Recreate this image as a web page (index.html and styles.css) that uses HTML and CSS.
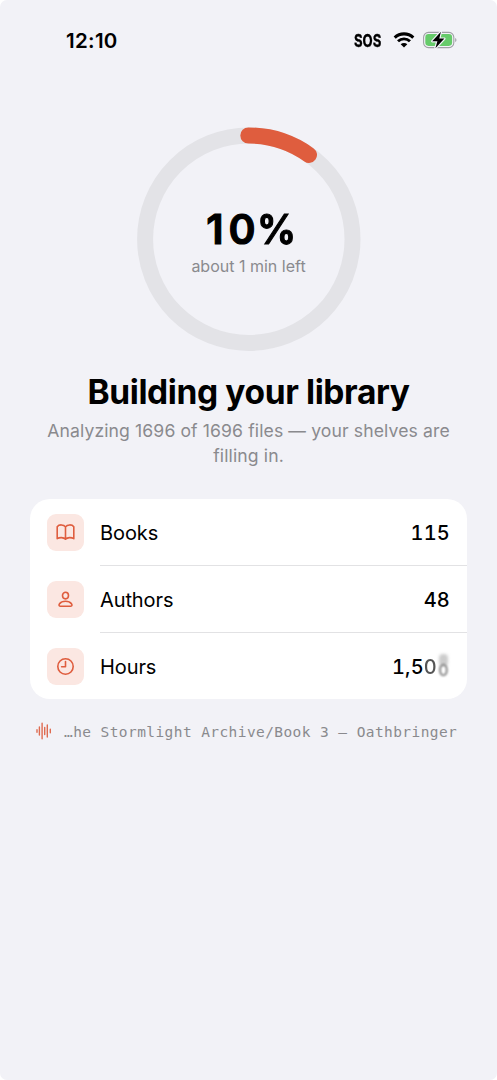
FILE: index.html
```html
<!DOCTYPE html>
<html lang="en">
<head>
<meta charset="utf-8">
<title>Building your library</title>
<link rel="stylesheet" href="styles.css">
</head>
<body>
<main class="screen">
  <header class="status">
    <span class="time">12:10</span>
    <div class="indicators">
      <span class="sos">SOS</span>
      <svg class="wifi" width="22" height="16" viewBox="0 0 22 16">
        <path d="M1.700 5.600C7 .6 15 .6 20.300 5.600" fill="none" stroke="#000" stroke-width="3.1"/>
        <path d="M5 9.300C8.400 6.100 13.600 6.100 17 9.300" fill="none" stroke="#000" stroke-width="2.900"/>
        <path d="M11 15.600L7.700 12.200C9.500 10.600 12.500 10.600 14.300 12.200Z"/>
      </svg>
      <svg class="battery" width="34" height="20" viewBox="0 0 34 20">
        <rect x=".6" y="2.400" width="30.200" height="15.200" rx="4.800" fill="#f2f2f7" stroke="#a0a0a5" stroke-width="1.100"/>
        <rect x="2.300" y="4.100" width="26.800" height="11.800" rx="3.300" fill="#66cb6a"/>
        <path d="M32.200 7.900C33.900 8.600 33.900 11.400 32.200 12.100Z" fill="#a0a0a5"/>
        <path d="M17.900 1.800L9.200 11.200H14.400L12.400 18.200L21.400 8.600H16.300Z" fill="#000" stroke="#f2f2f7" stroke-width="2.400" stroke-linejoin="round" paint-order="stroke"/>
      </svg>
    </div>
  </header>

  <section class="progress">
    <svg class="ring" width="224" height="224" viewBox="0 0 224 224">
      <circle cx="111.800" cy="112.200" r="103.700" fill="none" stroke="#e3e3e7" stroke-width="16"/>
      <path d="M111.300 8.500A103.700 103.700 0 0 1 172 27.900" fill="none" stroke="#df5d3e" stroke-width="16" stroke-linecap="round"/>
    </svg>
    <div class="reading">
      <span class="percent"><span class="lead">1</span>0<span class="sign">%</span></span>
      <span class="remaining">about 1 min left</span>
    </div>
  </section>

  <h1 class="title">Building your library</h1>
  <p class="subtitle">Analyzing 1696 of 1696 files — your shelves are<br>filling in.</p>

  <section class="card">
    <div class="row">
      <span class="tile">
        <svg class="icon" width="21" height="21" viewBox="0 0 21 21">
          <path d="M10.500 4.900C8.700 2.300 4 2.300 2.200 4.700V16.700C4.500 15.200 8.500 15.200 10.500 17.200C12.500 15.200 16.500 15.200 18.800 16.700V4.700C17 2.300 12.300 2.300 10.500 4.900ZV17"/>
        </svg>
      </span>
      <div class="line"><span>Books</span><span class="value">115</span></div>
    </div>
    <div class="row">
      <span class="tile">
        <svg class="icon" width="21" height="21" viewBox="0 0 21 21">
          <ellipse cx="10.500" cy="6.600" rx="3" ry="3.300"/>
          <path d="M5.200 17.200C2.600 17.200 4.300 12.300 10.500 12.300S18.400 17.200 15.800 17.200Z"/>
        </svg>
      </span>
      <div class="line"><span>Authors</span><span class="value">48</span></div>
    </div>
    <div class="row">
      <span class="tile">
        <svg class="icon" width="21" height="21" viewBox="0 0 21 21">
          <circle cx="10.500" cy="10.500" r="7.700"/>
          <path d="M10.500 5.500V10.700H6.600"/>
        </svg>
      </span>
      <div class="line"><span>Hours</span><span class="value rolling">1,5<span class="settling">0</span><span class="digit"><span class="outgoing"></span><span class="incoming">0</span></span></span></div>
    </div>
  </section>

  <footer class="current">
    <svg class="wave" width="16" height="18" viewBox="0 0 16 18">
      <path d="M1 7.800V10.200M3.400 5V13M6.100 1.200V16.800M8.700 5.500V12.500M11.300 3V15M14.300 7.200V10.800"/>
    </svg>
    <span class="path">…he Stormlight Archive/Book 3 – Oathbringer</span>
  </footer>
</main>
</body>
</html>
```
FILE: styles.css
```css
* { box-sizing: border-box; }
html { background: #fff; }
body { margin: 0; font-family: Inter, "Liberation Sans", sans-serif; color: #000; }
svg { display: block; flex: none; }
.screen {
  display: flex;
  flex-direction: column;
  width: 497px;
  height: 1080px;
  padding: 0 30px;
  overflow: hidden;
  border-radius: 7px;
  background: #f2f2f7;
}
.status {
  display: flex;
  align-items: center;
  justify-content: space-between;
  height: 80px;
  padding: 0 10px 0 36px;
}
.time { padding-top: 2px; font-size: 20.500px; font-weight: 600; letter-spacing: .3px; line-height: 24px; }
.indicators { display: flex; align-items: center; }
.sos {
  width: 28px;
  margin-right: 11px;
  padding-top: 1px;
  font-size: 18px;
  font-weight: 700;
  line-height: 24px;
  -webkit-text-stroke: .4px #000;
  transform: scaleX(.73);
  transform-origin: 0 50%;
}
.wifi { margin-right: 8px; }
.progress { display: grid; place-items: center; height: 224px; margin-top: 47px; }
.ring, .reading { grid-area: 1 / 1; }
.reading { display: flex; flex-direction: column; align-items: center; padding-top: 6px; }
.percent {
  display: flex;
  padding-left: 7px;
  font-size: 41px;
  font-weight: 600;
  line-height: 46px;
  -webkit-text-stroke: 1.200px #000;
  stroke-linejoin: round;
}
.lead { margin-right: 5px; }
.sign { margin-left: 1px; transform: scaleX(.95); transform-origin: 0 50%; }
.remaining { margin-top: 2px; font-size: 16px; line-height: 24px; color: #8a8a8e; white-space: nowrap; }
.title {
  margin: 20px 0 0;
  font-size: 33.500px;
  font-weight: 660;
  line-height: 42px;
  letter-spacing: -.380px;
  text-align: center;
  white-space: nowrap;
}
.subtitle {
  margin: 6px 0 0;
  font-size: 17.600px;
  line-height: 24.500px;
  letter-spacing: .110px;
  text-align: center;
  color: #8a8a8e;
  white-space: nowrap;
}
.card { height: 200px; margin-top: 31px; overflow: hidden; border-radius: 20px; background: #fff; }
.row { display: flex; align-items: center; gap: 16px; height: 67px; padding-left: 17px; }
.tile { display: grid; place-items: center; width: 37px; height: 37px; border-radius: 9px; background: #fbe7e2; }
.icon { fill: none; stroke: #df5d3e; stroke-width: 1.600; stroke-linecap: round; stroke-linejoin: round; }
.line {
  display: flex;
  flex: 1;
  align-items: center;
  justify-content: space-between;
  height: 67px;
  padding: 2px 17px 0 0;
  border-bottom: 1px solid #e2e2e4;
  font-size: 20px;
  letter-spacing: -.1px;
}
.row:last-child .line { border-bottom-color: transparent; }
.value { font-weight: 550; letter-spacing: .2px; font-variant-numeric: tabular-nums; }
.rolling { display: flex; }
.settling { color: #555; filter: blur(.5px); }
.digit { display: grid; place-items: center; width: 13px; }
.outgoing, .incoming { grid-area: 1 / 1; }
/* Motion trail of the digit that is scrolling out. */
.outgoing {
  width: 9px;
  height: 12px;
  border-radius: 4px;
  background: #ccc;
  filter: blur(1.800px);
  transform: translateY(-7px);
}
.incoming { font-size: 16px; color: #777; filter: blur(.9px); transform: translateY(3px); }
.current { display: flex; align-items: center; gap: 12px; height: 24px; margin-top: 20px; padding-left: 6px; }
.wave { fill: none; stroke: #df6b50; stroke-width: 1.400; stroke-linecap: round; }
.path {
  padding-top: 1px;
  font-family: "DejaVu Sans Mono", monospace;
  font-size: 14.500px;
  letter-spacing: .415px;
  line-height: 24px;
  color: #8a8a8e;
  white-space: nowrap;
}
```
